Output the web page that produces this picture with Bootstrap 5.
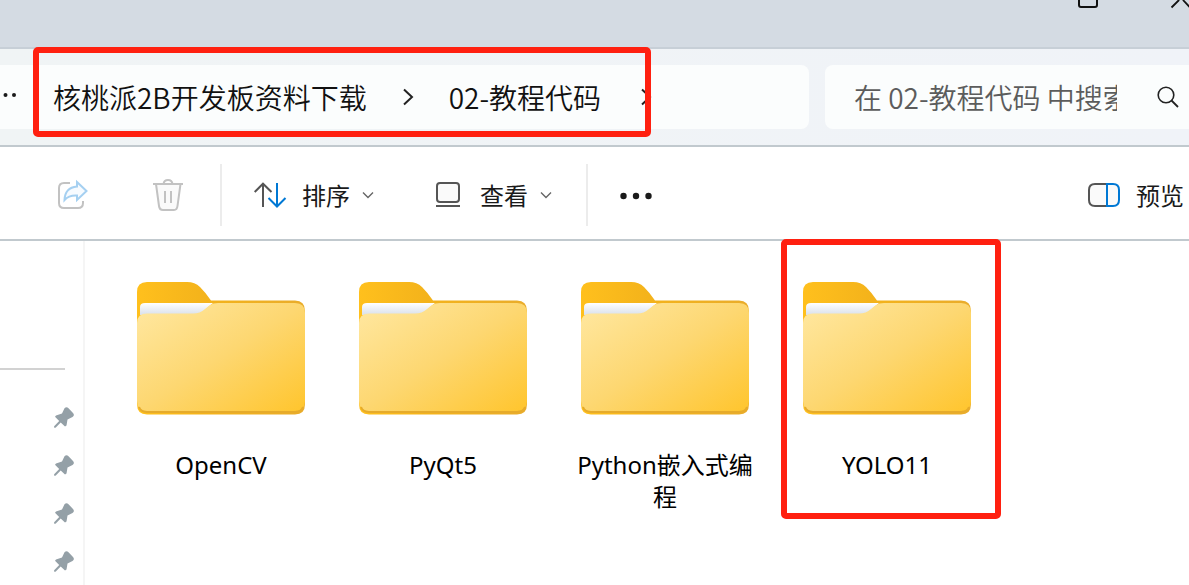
<!DOCTYPE html>
<html lang="zh-CN">
<head>
<meta charset="utf-8">
<meta name="viewport" content="width=device-width, initial-scale=1">
<title>02-教程代码</title>
<link rel="stylesheet" href="https://cdn.jsdelivr.net/npm/bootstrap@5.3.0/dist/css/bootstrap.min.css">
<style>
  body { font-family: "Noto Sans", "Noto Sans CJK SC", sans-serif; color: #1a1a1a; background: #fff; }
  svg { display: block; flex: none; overflow: visible; }
  button { color: inherit; }
  .plain-btn { border: 0; padding: 0; background: none; display: flex; align-items: center; }
  .title-strip { height: 49px; background: #d4dbe3; border-bottom: 2px solid #c7cfd7; padding-right: 1px; gap: 73px; overflow: hidden; }
  .address-row { padding: 16px 0; gap: 16px; background: linear-gradient(90deg, #f0f4f5, #f0f3f8); border-bottom: 2px solid #c1c9ce; }
  .path-box, .search-box { height: 64px; background: #fbfdfd; font-family: "Noto Sans CJK SC", sans-serif; font-size: 28px; font-weight: 350; line-height: 40px; }
  .path-box { border-radius: 0 8px 8px 0; gap: 35px; white-space: nowrap; }
  .path-box a { color: #111; text-decoration: none; }
  .search-box { width: 364px; border-radius: 8px 0 0 8px; padding: 0 10px 0 29px; }
  .search-box input { width: 263px; border: 0; padding: 0; background: none; outline: 0; font-weight: inherit; }
  .search-box input::placeholder { color: #5c5c5c; opacity: 1; }
  .tool-row { height: 94px; padding: 4px 5px 0 57px; border-bottom: 2px solid #c1c9ce; font-family: "Noto Sans CJK SC", sans-serif; font-size: 24px; line-height: 36px; white-space: nowrap; }
  .tool-rule { width: 2px; height: 62px; margin: 0 32px 0 34px; background: #ececec; }
  .gap-after { margin-right: 60px; }
  .side-pane { width: 85px; border-right: 2px solid #f5f5f5; padding-top: 127px; flex: none; }
  .side-rule { width: 65px; height: 2px; background: #d2d2d2; margin-bottom: 23px; }
  .side-pane li { height: 48px; padding-right: 9px; }
  .files { padding: 0 0 0 25px; }
  .folder-item { width: 222px; padding: 41px 19px 0; color: #000; font-size: 24px; line-height: 32px; text-decoration: none; text-align: center; }
  .folder-item svg { margin: 0 auto 34px 8px; }
  .marker { position: absolute; border: 6px solid #ff2010; border-radius: 5px; pointer-events: none; z-index: 2; }
  .path-marker { left: 33px; top: -18px; width: 618px; height: 90px; }
  .folder-marker { left: 5px; top: -2px; width: 220px; height: 280px; }
</style>
</head>
<body class="d-flex flex-column min-vh-100">
<svg width="0" height="0" class="position-absolute" aria-hidden="true">
  <defs>
    <linearGradient id="front" x1="0" y1="0" x2="1" y2="1"><stop offset="0" stop-color="#ffe8a2"/><stop offset=".5" stop-color="#fdd771"/><stop offset="1" stop-color="#ffc52d"/></linearGradient>
    <linearGradient id="paper" x1="0" y1="0" x2="0" y2="1"><stop offset="0" stop-color="#fff"/><stop offset="1" stop-color="#d9e0ea"/></linearGradient>
    <linearGradient id="tab" x1="0" y1="0" x2="1" y2="0"><stop offset="0" stop-color="#ffc01d"/><stop offset=".4" stop-color="#f4b31b"/><stop offset="1" stop-color="#e9ac2b"/></linearGradient>
    <symbol id="folder" viewBox="0 0 168 133">
      <path d="M0 10Q0 0 10 0H50Q58 0 63 5Q69 11 74 18.500H158Q168 18.500 168 29V122Q168 132.500 158 132.500H10Q0 132.500 0 122Z" fill="url(#tab)"/>
      <path d="M3 25Q3 21 8 21H76L62 33H3Z" fill="url(#paper)"/>
      <path d="M0 41Q0 31.500 10 31.500H56Q63 31.500 68 27L73 23Q76 21 81 21H158Q168 21 168 31V119Q168 129 158 129H10Q0 129 0 119Z" fill="url(#front)"/>
      <path d="M2 125Q4 130 10 130H158Q164 130 166 125" fill="none" stroke="#e6ab2b" stroke-width="2"/>
    </symbol>
    <symbol id="pin" viewBox="0 0 20 21">
      <path d="M10.500 1.200Q12.500-.8 14.500 1.200L19 6Q21 8.300 18.500 10L13.500 12.500L12.500 18.500L11 19.500L6.700 15.500L1.800 20.500Q.8 21.200.2 20.500Q-.3 19.800.4 19L5.200 14L1 9.800L2 8.500L8 6.500Z" fill="#94a0a7"/>
    </symbol>
    <symbol id="down" viewBox="0 0 12 8"><path d="M1 1.500L6 6.500L11 1.500" fill="none" stroke="#666" stroke-width="1.400"/></symbol>
    <symbol id="next" viewBox="0 0 12 18"><path d="M2 1.500L10 9L2 16.500" fill="none" stroke="#222" stroke-width="2"/></symbol>
  </defs>
</svg>

<header class="title-strip d-flex justify-content-end align-items-start">
  <button class="plain-btn" aria-label="最大化"><svg width="20" height="8"><path d="M1 0V5Q1 7 3 7H17Q19 7 19 5V0" fill="none" stroke="#111" stroke-width="2"/></svg></button>
  <button class="plain-btn" aria-label="关闭"><svg width="17" height="8"><path d="M.5 7.500L8 0M12 0L19 7.500M7 0L10-1.500L13 0" fill="none" stroke="#111" stroke-width="1.800"/></svg></button>
</header>

<div class="address-row d-flex">
  <nav class="path-box d-flex align-items-center flex-grow-1 position-relative" aria-label="路径">
    <button class="plain-btn" aria-label="更多路径"><svg width="18" height="18"><circle cx="5.500" cy="7" r="2" fill="#1a1a1a"/><circle cx="14" cy="7" r="2" fill="#1a1a1a"/></svg></button>
    <a href="#">核桃派2B开发板资料下载</a>
    <svg width="12" height="18"><use href="#next"/></svg>
    <a href="#">02-教程代码</a>
    <svg class="ms-1" width="12" height="18"><use href="#next"/></svg>
    <span class="marker path-marker"></span>
  </nav>
  <form class="search-box d-flex align-items-center justify-content-between" role="search">
    <input type="text" placeholder="在 02-教程代码 中搜索" aria-label="搜索">
    <button type="button" class="plain-btn" aria-label="开始搜索"><svg width="22" height="22"><circle cx="9" cy="9" r="7.800" fill="none" stroke="#222" stroke-width="1.600"/><path d="M14.500 14.500L21 21" stroke="#222" stroke-width="1.800"/></svg></button>
  </form>
</div>

<div class="tool-row d-flex align-items-center" role="toolbar" aria-label="工具栏">
  <button class="plain-btn gap-after" aria-label="共享" disabled>
    <svg width="35" height="32" fill="none" stroke-width="2"><path d="M13 4H7Q2 4 2 9V24Q2 29 7 29H21Q26 29 26 24V22" stroke="#c2c2c2"/><path d="M20 3L29.500 12L20 21V16.500Q12 16 7.500 21Q8 8.500 20 7.500Z" stroke="#a5d0f1" fill="#f7fbff"/></svg>
  </button>
  <button class="plain-btn" aria-label="删除" disabled>
    <svg width="34" height="32" fill="none" stroke="#c2c2c2" stroke-width="2"><path d="M4 5L7 27Q7.500 31 11 31H22Q25 31 25.500 27L28.500 5" fill="#fafafa"/><path d="M1 5H31M11.500 5Q12 1 16 1Q20 1 20.500 5M13 12V24M19 12V24"/></svg>
  </button>
  <span class="tool-rule"></span>
  <button class="plain-btn gap-after">
    <svg width="32" height="32" fill="none" stroke-width="2"><path d="M9 28V5M.7 13L9 4.700L17.500 13" stroke="#555"/><path d="M23 4V27M14.500 19L23 27.500L31.500 19" stroke="#0078d4"/></svg>
    <span class="ms-3 me-2 pe-1">排序</span>
    <svg width="12" height="8"><use href="#down"/></svg>
  </button>
  <button class="plain-btn">
    <svg width="30" height="32" fill="none" stroke="#555" stroke-width="2"><rect x="3" y="4" width="22" height="19" rx="3" fill="#fafafa"/><path d="M2 27H26"/></svg>
    <span class="ms-3 me-2 pe-1">查看</span>
    <svg width="12" height="8"><use href="#down"/></svg>
  </button>
  <span class="tool-rule"></span>
  <button class="plain-btn" aria-label="更多选项">
    <svg width="32" height="8" fill="#1a1a1a"><circle cx="3.500" cy="5" r="3.200"/><circle cx="16" cy="5" r="3.200"/><circle cx="28.500" cy="5" r="3.200"/></svg>
  </button>
  <button class="plain-btn ms-auto">
    <svg width="32" height="32" fill="none" stroke-width="2"><path d="M18 5H7Q1 5 1 11V21Q1 27 7 27H18" fill="#fafafa" stroke="#555"/><path d="M19 5H25Q31 5 31 11V21Q31 27 25 27H19Z" fill="#fafafa" stroke="#0078d4"/></svg>
    <span class="ms-3">预览</span>
  </button>
</div>

<div class="d-flex flex-grow-1">
  <aside class="side-pane">
    <div class="side-rule"></div>
    <ul class="list-unstyled mb-0">
      <li class="d-flex align-items-center justify-content-end"><svg width="20" height="21"><use href="#pin"/></svg></li>
      <li class="d-flex align-items-center justify-content-end"><svg width="20" height="21"><use href="#pin"/></svg></li>
      <li class="d-flex align-items-center justify-content-end"><svg width="20" height="21"><use href="#pin"/></svg></li>
      <li class="d-flex align-items-center justify-content-end"><svg width="20" height="21"><use href="#pin"/></svg></li>
    </ul>
  </aside>
  <main class="files d-flex flex-wrap flex-grow-1 align-items-start">
    <a class="folder-item" href="#"><svg width="168" height="133"><use href="#folder"/></svg>OpenCV</a>
    <a class="folder-item" href="#"><svg width="168" height="133"><use href="#folder"/></svg>PyQt5</a>
    <a class="folder-item" href="#"><svg width="168" height="133"><use href="#folder"/></svg>Python嵌入式编程</a>
    <a class="folder-item position-relative" href="#"><svg width="168" height="133"><use href="#folder"/></svg>YOLO11<span class="marker folder-marker"></span></a>
  </main>
</div>
<script src="https://cdn.jsdelivr.net/npm/bootstrap@5.3.0/dist/js/bootstrap.bundle.min.js"></script>
</body>
</html>
